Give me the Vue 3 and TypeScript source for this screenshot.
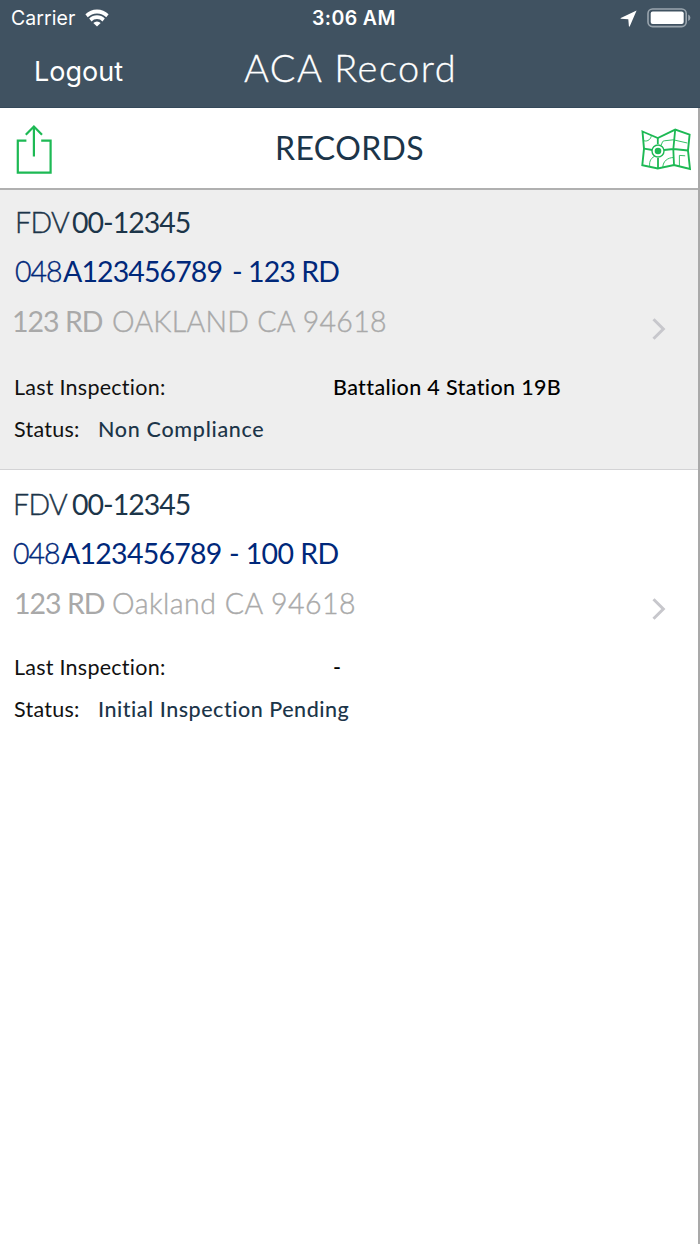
<script setup lang="ts">
interface InspectionRecord {
  key: string
  prefix: string
  number: string
  parcelPrefix: string
  parcel: string
  parcelRoad: string
  street: string
  city: string
  lastInspection: string
  status: string
}

const records: InspectionRecord[] = [
  {
    key: 'first',
    prefix: 'FDV',
    number: '00-12345',
    parcelPrefix: '048',
    parcel: 'A123456789',
    parcelRoad: '- 123 RD',
    street: '123 RD',
    city: 'OAKLAND CA 94618',
    lastInspection: 'Battalion 4 Station 19B',
    status: 'Non Compliance',
  },
  {
    key: 'second',
    prefix: 'FDV',
    number: '00-12345',
    parcelPrefix: '048',
    parcel: 'A123456789',
    parcelRoad: '- 100 RD',
    street: '123 RD',
    city: 'Oakland CA 94618',
    lastInspection: '-',
    status: 'Initial Inspection Pending',
  },
]
</script>

<template>
  <div class="screen">
    <header class="top">
      <div class="status-bar">
        <div class="side">
          <span class="carrier">Carrier</span>
          <svg class="wifi" width="24" height="18" viewBox="0 0 24 18">
            <path d="M0.4 5.2a16.6 16.6 0 0 1 23.2 0l-2.3 3a13.3 13.3 0 0 0-18.6 0z" fill="#fff" />
            <path d="M4.2 9.6a11 11 0 0 1 15.6 0l-2.3 2.8a7.7 7.7 0 0 0-11 0z" fill="#fff" />
            <path d="M8.3 13.9a5.3 5.3 0 0 1 7.4 0L12 17.6z" fill="#fff" />
          </svg>
        </div>
        <span class="clock">3:06 AM</span>
        <div class="side right">
          <svg class="locate" width="17" height="17" viewBox="0 0 17 17">
            <path d="M16.6 .4 .8 7.9q-.7.7.2.8l7.3.5.6 7q.3.8.9.1z" fill="#fff" />
          </svg>
          <svg class="battery" width="44" height="20" viewBox="0 0 44 20">
            <rect x="1" y="1" width="38.2" height="17.6" rx="4.5" fill="none" stroke="#9aa5ae" stroke-width="1.6" />
            <rect x="3.7" y="3.6" width="33" height="12.4" rx="2" fill="#fff" />
            <path d="M41.2 6.5q2.2 1 2.2 3.3t-2.2 3.3z" fill="#9aa5ae" />
          </svg>
        </div>
      </div>
      <nav class="nav">
        <span class="logout">Logout</span>
        <h1 class="title">ACA Record</h1>
      </nav>
    </header>

    <main class="content">
      <div class="toolbar">
        <svg class="share" width="36" height="50" viewBox="0 0 36 50" fill="none" stroke="#1db954" stroke-width="2.2">
          <path d="M10.4 15.7H1.8V47.6H34.6V15.7H25.2M17.9 31.5V1.5M9.8 9.8L17.9 1.6l8.1 8.2" />
        </svg>
        <h2 class="heading">RECORDS</h2>
        <svg class="map" width="52" height="44" viewBox="0 0 52 44" fill="none" stroke="#1db954">
          <path
            d="M2.5 3.5 17.8 10 35.2 1.6 49.6 6.7 48 22.5 50 41 34 37 17.8 40.5 2.3 37.2 4 20.7z"
            stroke-width="1.9"
          />
          <path
            d="M17.8 10V16M18 30V40.5M35.2 1.6 33.3 21.3 34 37M4 20.7 12.5 22M24 22l9.5-1L48 22.5"
            stroke-width="1.8"
          />
          <path
            d="M4 12.8c4 1 7-1.8 7.4-5.5M21 17.5l1.5-3.6q.4-1 1.8-1.1l9-1 14 3.2M9.7 38c-.8-5 2-9 6-10M22.8 39c.4-6 5-9.3 10.6-9.5M39.4 38V27.4l5.8.4"
            stroke-width="0.9"
          />
          <circle cx="18" cy="23" r="6" stroke-width="1.4" fill="#fff" />
          <circle cx="18" cy="23" r="3.3" fill="#1db954" stroke="none" />
        </svg>
      </div>

      <section v-for="record in records" :key="record.key" class="record" :class="record.key">
        <div class="details">
          <div class="line id"><span class="lead">{{ record.prefix }}</span><span class="num">{{ record.number }}</span></div>
          <div class="line parcel">
            <span class="lead">{{ record.parcelPrefix }}</span><span class="num">{{ record.parcel }}</span><span class="road">{{ record.parcelRoad }}</span>
          </div>
          <div class="line address"><span class="street">{{ record.street }}</span><span class="city">{{ record.city }}</span></div>
          <div class="meta inspection"><span class="label">Last Inspection:</span><span class="value">{{ record.lastInspection }}</span></div>
          <div class="meta status"><span class="label">Status:</span><span class="value">{{ record.status }}</span></div>
        </div>
        <svg class="chevron" width="14" height="22" viewBox="0 0 14 22">
          <path d="M1.5 1.3 11.3 11 1.5 20.7" fill="none" stroke="#c7c7cc" stroke-width="3" />
        </svg>
      </section>
    </main>
  </div>
</template>

<style>
body {
  margin: 0;
  background: #fff;
}
</style>

<style scoped>
.screen {
  width: 700px;
  height: 1244px;
  display: flex;
  flex-direction: column;
  overflow: hidden;
  background: #fff;
  font-family: Lato, "Noto Sans", sans-serif;
  font-variant-ligatures: none;
}
.top {
  height: 108px;
  box-sizing: border-box;
  background: #405261;
  border-bottom: 1px solid #35495a;
  color: #fff;
}
.status-bar {
  display: grid;
  grid-template-columns: 301px auto 1fr;
  height: 36px;
  align-items: center;
  padding: 0 9px 0 11px;
  font-family: Inter, sans-serif;
  font-size: 19.5px;
}
.side {
  display: flex;
  align-items: center;
}
.right {
  justify-content: flex-end;
}
.carrier {
  width: 74px;
  letter-spacing: 0.05px;
}
.clock {
  font-weight: 600;
  letter-spacing: 0.4px;
}
.locate {
  margin-right: 10px;
}
.nav {
  display: grid;
  grid-template-columns: 244px 1fr;
  height: 71px;
}
.logout {
  padding-left: 34px;
  font-family: Inter, sans-serif;
  font-size: 27px;
  line-height: 71px;
}
.title {
  margin: 0;
  font-size: 38px;
  font-weight: 300;
  line-height: 62px;
  letter-spacing: 1.55px;
  -webkit-text-stroke: 0.3px currentColor;
}
.content {
  flex: 1;
  border-right: 2px solid #a9a9a9;
}
.toolbar {
  height: 82px;
  box-sizing: border-box;
  display: grid;
  grid-template-columns: 259px auto 1fr;
  align-items: center;
  padding: 0 6px 0 16px;
  border-bottom: 2px solid #b0b0b0;
}
.share {
  margin-top: 3px;
}
.map {
  justify-self: end;
  margin-top: 3px;
}
.heading {
  margin: -2px 0 0;
  font-size: 32px;
  font-weight: 400;
  letter-spacing: 0.4px;
  color: #1c3549;
}
.record {
  height: 280px;
  box-sizing: border-box;
  display: flex;
  justify-content: space-between;
}
.first {
  background: #eee;
  border-bottom: 1px solid #d3d3d5;
  padding-top: 12px;
}
.second {
  padding-top: 14px;
}
.chevron {
  margin: 116px 32px 0 0;
}
.second .chevron {
  margin-top: 114px;
}
.line {
  display: flex;
  height: 40px;
  font-size: 28.5px;
  line-height: 40px;
  white-space: pre;
  letter-spacing: -1px;
}
.id {
  color: #1c3549;
  padding-left: 15px;
}
.id .lead {
  width: 57px;
  letter-spacing: -0.6px;
}
.second .id {
  padding-left: 13px;
}
.second .id .lead {
  width: 59px;
}
.parcel {
  margin-top: 9px;
  padding-left: 15px;
  color: #00287a;
}
.parcel .lead {
  width: 48px;
}
.parcel .num {
  width: 169px;
  letter-spacing: -0.9px;
}
.second .parcel {
  margin-top: 9px;
  padding-left: 13px;
}
.second .parcel .num {
  width: 168px;
  letter-spacing: -0.75px;
}
.road {
  letter-spacing: -0.9px;
}
.second .road {
  letter-spacing: -0.6px;
}
.address {
  margin-top: 10px;
  padding-left: 12px;
  color: #a9a9a9;
}
.street {
  width: 100px;
}
.second .address {
  padding-left: 14px;
}
.second .street {
  width: 98px;
}
.city,
.lead {
  font-weight: 300;
  -webkit-text-stroke: 0.4px currentColor;
}
.city {
  letter-spacing: 0.28px;
}
.second .city {
  letter-spacing: 0.5px;
}
.meta {
  display: flex;
  height: 30px;
  margin-top: 12px;
  padding-left: 14px;
  font-size: 21.5px;
  line-height: 30px;
  white-space: pre;
  color: #111;
}
.meta .label {
  width: 84px;
  letter-spacing: 0.25px;
}
.meta .value {
  font-weight: 500;
  letter-spacing: 0.52px;
  color: #1c3549;
}
.first .status .value {
  letter-spacing: 0.7px;
}
.inspection {
  margin-top: 31px;
}
.second .inspection {
  margin-top: 29px;
}
.inspection .label {
  width: 319px;
}
.meta.inspection .value {
  letter-spacing: 0.36px;
  color: #000;
}
</style>
